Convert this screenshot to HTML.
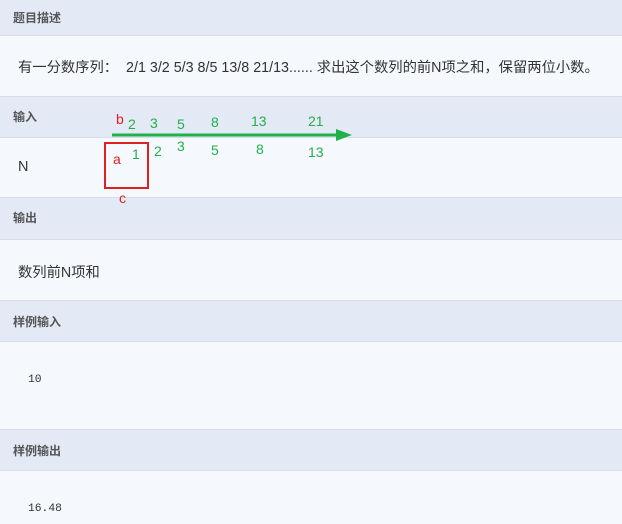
<!DOCTYPE html>
<html><head><meta charset="utf-8"><style>
body{margin:0;width:622px;height:524px;overflow:hidden;background:#f5f8fd;font-family:"Liberation Sans","Noto Sans CJK SC",sans-serif;position:relative}
.h{position:absolute;left:0;width:622px;background:#e3eaf6;border-top:1px solid #d9dee6;border-bottom:1px solid #d9dee6;box-sizing:border-box;font-weight:bold;color:#555;font-size:12px;padding-left:13px}
.t{position:absolute;left:18px;font-size:14.3px;color:#333}
.m{position:absolute;left:28px;font-family:"Liberation Mono",monospace;font-size:11.3px;color:#333}
.g{position:absolute;color:#22b04a;font-size:14px}
.r{position:absolute;color:#e02020;font-size:14px}
</style></head><body>
<div class="h" style="top:-1px;height:37px;line-height:36px">题目描述</div>
<div class="t" style="top:56px">有一分数序列：&nbsp; 2/1 3/2 5/3 8/5 13/8 21/13...... 求出这个数列的前N项之和，保留两位小数。</div>
<div class="h" style="top:96px;height:42px;line-height:40px">输入</div>
<div class="t" style="top:159px;font-size:14.5px">N</div>
<div class="h" style="top:197px;height:43px;line-height:41px">输出</div>
<div class="t" style="top:261px">数列前N项和</div>
<div class="h" style="top:300px;height:42px;line-height:42px">样例输入</div>
<div class="m" style="top:374px">10</div>
<div class="h" style="top:429px;height:42px;line-height:42px">样例输出</div>
<div class="m" style="top:503px">16.48</div>
<svg style="position:absolute;left:0;top:0" width="622" height="524">
<line x1="112" y1="135" x2="340" y2="135" stroke="#22b04a" stroke-width="3"/>
<polygon points="336,129 352,135 336,141" fill="#22b04a"/>
<rect x="105" y="143" width="43" height="45" fill="none" stroke="#e02020" stroke-width="2"/>
</svg>
<div class="r" style="left:116px;top:111px">b</div>
<div class="r" style="left:113px;top:151px">a</div>
<div class="r" style="left:119px;top:190px">c</div>
<div class="g" style="left:128px;top:116px">2</div>
<div class="g" style="left:150px;top:115px">3</div>
<div class="g" style="left:177px;top:116px">5</div>
<div class="g" style="left:211px;top:114px">8</div>
<div class="g" style="left:251px;top:113px">13</div>
<div class="g" style="left:308px;top:113px">21</div>
<div class="g" style="left:132px;top:146px">1</div>
<div class="g" style="left:154px;top:143px">2</div>
<div class="g" style="left:177px;top:138px">3</div>
<div class="g" style="left:211px;top:142px">5</div>
<div class="g" style="left:256px;top:141px">8</div>
<div class="g" style="left:308px;top:144px">13</div>
</body></html>
